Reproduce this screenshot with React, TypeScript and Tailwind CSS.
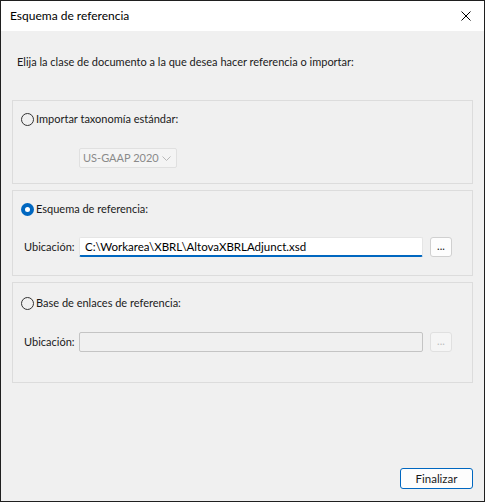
import React from 'react';

const font = { fontFamily: 'Lato, "Noto Sans", Arial, sans-serif' };

function Radio({ checked, label }: { checked?: boolean; label: string }) {
  return (
    <div className="flex items-center h-[18px]">
      {checked ? (
        <span className="w-[13px] h-[13px] rounded-full bg-[#0067c0] flex items-center justify-center shrink-0">
          <span className="w-[5px] h-[5px] rounded-full bg-white" />
        </span>
      ) : (
        <span className="w-[13px] h-[13px] rounded-full border border-[#333333] bg-[#f0f0f0] shrink-0" />
      )}
      <span className="ml-[2px] text-[#1a1a1a] whitespace-nowrap">{label}</span>
    </div>
  );
}

function LocationRow({ value, disabled }: { value?: string; disabled?: boolean }) {
  return (
    <div className="flex items-center h-[20px]">
      <span className="w-[66px] pl-[11px] shrink-0 whitespace-nowrap text-[#1a1a1a]">Ubicación:</span>
      {disabled ? (
        <div className="w-[344px] h-[20px] border border-[#c4c4c4] rounded-[2px] bg-[#f0f0f0]" />
      ) : (
        <div className="w-[344px] h-[20px] bg-white border border-[#e5e5e5] border-b-2 border-b-[#0067c0] rounded-[2px] flex items-center pl-[5px] text-black whitespace-nowrap text-[11.5px]">
          {value}
        </div>
      )}
      <div
        className={`ml-[7px] w-[22px] h-[20px] rounded-[3px] border flex items-center justify-center pb-[3px] text-[11px] ${
          disabled ? 'border-[#e0e0e0] bg-[#f5f5f5] text-[#bdbdbd]' : 'border-[#d0d0d0] bg-[#fdfdfd] text-[#1a1a1a]'
        }`}
      >
        ...
      </div>
    </div>
  );
}

export default function App() {
  return (
    <div
      className="w-[485px] h-[502px] border border-[#1f1f1f] flex flex-col text-[11px] leading-[16px] select-none"
      style={font}
    >
      {/* Title bar */}
      <div className="h-[30px] bg-white flex items-center justify-between pl-[9px] pr-[13px] shrink-0">
        <span className="text-black text-[12px]">Esquema de referencia</span>
        <svg width="10" height="10" viewBox="0 0 10 10" className="text-black">
          <path d="M0.5 0.5 L9.5 9.5 M9.5 0.5 L0.5 9.5" stroke="currentColor" strokeWidth="1" fill="none" />
        </svg>
      </div>

      {/* Body */}
      <div className="flex-1 bg-[#f0f0f0] flex flex-col px-[11px]">
        <p className="mt-[23px] pl-[5px] text-[#1a1a1a] whitespace-nowrap">
          Elija la clase de documento a la que desea hacer referencia o importar:
        </p>

        <div className="mt-[30px] h-[84px] border border-[#dcdcdc] pt-[9px] pl-[8px]">
          <Radio label="Importar taxonomía estándar:" />
          <div className="ml-[58px] mt-[20px] w-[98px] h-[20px] border border-[#e0e0e0] rounded-[2px] bg-[#f4f4f4] flex items-center justify-between pl-[3px] pr-[5px] text-[#8a8a8a] whitespace-nowrap">
            <span>US-GAAP 2020</span>
            <svg width="9" height="5" viewBox="0 0 9 5">
              <path d="M0.5 0.5 L4.5 4.5 L8.5 0.5" stroke="#b8b8b8" fill="none" />
            </svg>
          </div>
        </div>

        <div className="mt-[6px] h-[86px] border border-[#dcdcdc] pt-[9px] pl-[8px]">
          <Radio checked label="Esquema de referencia:" />
          <div className="mt-[19px] -ml-[8px]">
            <LocationRow value="C:\Workarea\XBRL\AltovaXBRLAdjunct.xsd" />
          </div>
        </div>

        <div className="mt-[6px] h-[101px] border border-[#dcdcdc] pt-[11px] pl-[8px]">
          <Radio label="Base de enlaces de referencia:" />
          <div className="mt-[20px] -ml-[8px]">
            <LocationRow disabled />
          </div>
        </div>

        <div className="mt-auto mb-[12px] flex justify-end">
          <button className="w-[73px] h-[21px] rounded-[3px] border border-[#0067c0] bg-[#fdfdfd] text-[#1a1a1a] text-[11.5px]">
            Finalizar
          </button>
        </div>
      </div>
    </div>
  );
}
